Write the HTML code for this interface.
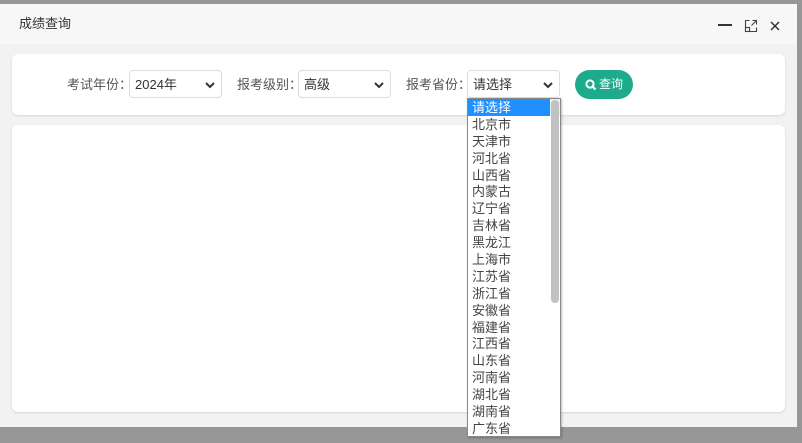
<!DOCTYPE html>
<html><head><meta charset="utf-8"><style>
*{margin:0;padding:0;box-sizing:border-box}
body{width:802px;height:443px;background:#979797;position:relative;overflow:hidden;font-family:"Liberation Sans","Noto Sans CJK SC",sans-serif;color:#333}
.dlg{position:absolute;left:0;top:4px;width:797px;height:423px;background:#f2f2f2}
.hd{height:40px;background:#f7f7f7;font-size:13px;line-height:40px;padding-left:19px;color:#333}
.card{position:absolute;left:12px;width:773px;background:#fff;border-radius:6px;box-shadow:0 1px 2px rgba(0,0,0,.12)}
.lbl{position:absolute;top:0;font-size:13px;line-height:28px;color:#555}
.sel{position:absolute;width:93px;height:28px;border:1px solid #ddd;border-radius:4px;background:#fff;font-size:13px;line-height:28px;padding-left:5px;color:#333}
.sel svg{position:absolute;right:6px;top:11px}
.btn{position:absolute;left:575px;top:70px;width:58px;height:29px;border-radius:15px;background:#1dab8c;color:#fff;font-size:12px;line-height:29px;padding-left:24px}
.list{position:absolute;left:467px;top:98px;width:94px;height:339px;background:#fff;border:1px solid #888;box-shadow:1px 1px 2px rgba(0,0,0,.25);font-size:13px;overflow:hidden}
.list div{height:16.9px;line-height:17px;padding-left:4px;color:#444}
.list .on{background:#1e90ff;color:#fff;width:83px}
.sb{position:absolute;right:0;top:0;width:10px;height:100%;background:#f0f0f0}
.sb i{position:absolute;left:1px;top:1px;width:8px;height:203px;background:#c1c1c1;border-radius:4px}
</style></head><body>
<div class="dlg">
<div class="hd">成绩查询</div>
<svg style="position:absolute;left:718px;top:20px" width="16" height="3"><rect width="14" height="2" fill="#333"/></svg>
<svg style="position:absolute;left:744px;top:15px" width="14" height="14" viewBox="0 0 14 14" fill="none" stroke="#444" stroke-width="1.1"><path d="M5.5 1.5H1.5V12.5H12.5V8.5"/><path d="M8.5 1.5H12.5V5.5M12.5 1.5L7.5 6.5"/><rect x="1.5" y="8.5" width="4" height="4"/></svg>
<svg style="position:absolute;left:770px;top:17px" width="10" height="10" viewBox="0 0 10 10" stroke="#333" stroke-width="1.5"><path d="M1 1L9 9M9 1L1 9"/></svg>
</div>
<div class="card" style="top:54px;height:61px"></div>
<div class="card" style="top:125px;height:287px"></div>
<div class="lbl" style="left:67px;top:71px">考试年份：</div>
<div class="sel" style="left:129px;top:70px">2024年<svg width="10" height="7"><path d="M1 1L5 5L9 1" stroke="#333" stroke-width="2" fill="none"/></svg></div>
<div class="lbl" style="left:237px;top:71px">报考级别：</div>
<div class="sel" style="left:298px;top:70px">高级<svg width="10" height="7"><path d="M1 1L5 5L9 1" stroke="#333" stroke-width="2" fill="none"/></svg></div>
<div class="lbl" style="left:406px;top:71px">报考省份：</div>
<div class="sel" style="left:467px;top:70px">请选择<svg width="10" height="7"><path d="M1 1L5 5L9 1" stroke="#333" stroke-width="2" fill="none"/></svg></div>
<div class="btn"><svg style="position:absolute;left:10px;top:9px" width="12" height="12" viewBox="0 0 12 12"><circle cx="5" cy="5" r="3.6" stroke="#fff" stroke-width="2" fill="none"/><path d="M7.5 7.5L10.5 10.5" stroke="#fff" stroke-width="2.2"/></svg>查询</div>
<div class="list">
<div class="on">请选择</div><div>北京市</div><div>天津市</div><div>河北省</div><div>山西省</div><div>内蒙古</div><div>辽宁省</div><div>吉林省</div><div>黑龙江</div><div>上海市</div><div>江苏省</div><div>浙江省</div><div>安徽省</div><div>福建省</div><div>江西省</div><div>山东省</div><div>河南省</div><div>湖北省</div><div>湖南省</div><div>广东省</div>
<div class="sb"><i></i></div>
</div>
</body></html>
